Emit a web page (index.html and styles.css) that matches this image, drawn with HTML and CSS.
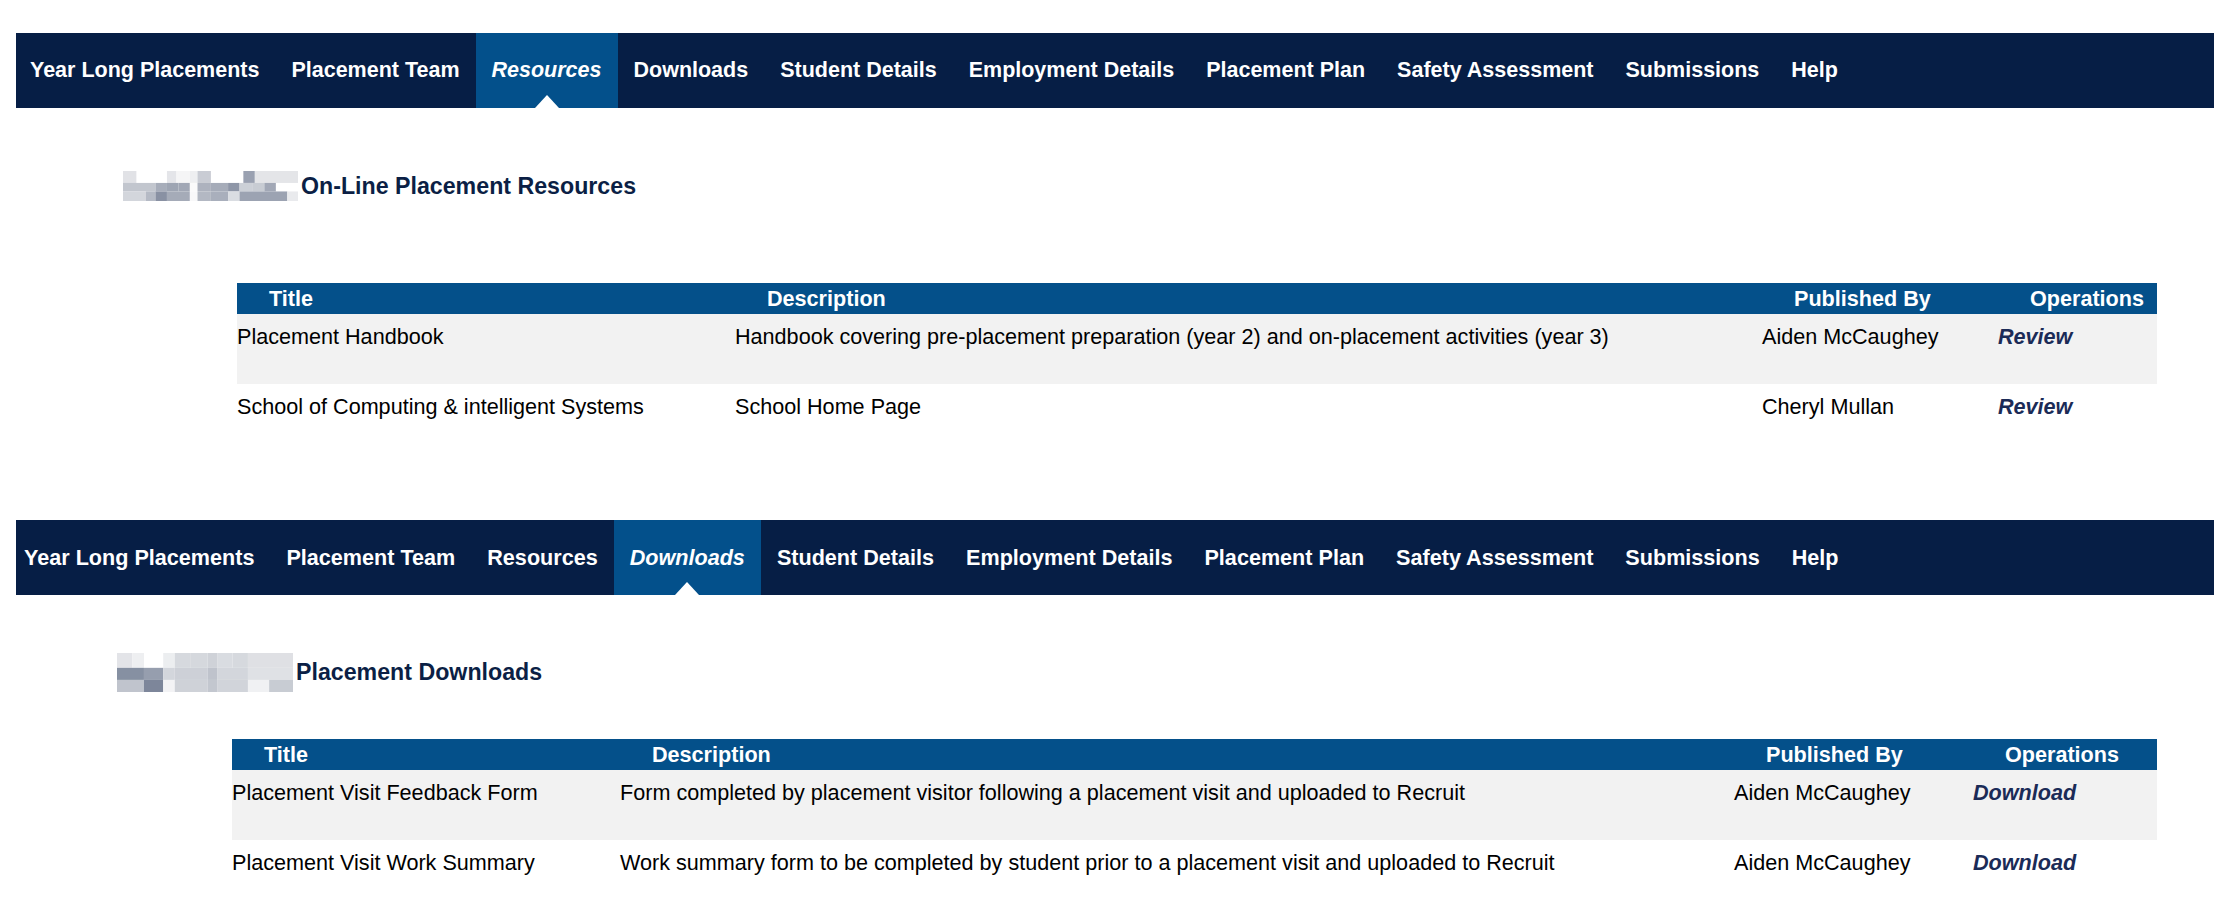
FILE: index.html
```html
<!DOCTYPE html>
<html lang="en">
<head>
<meta charset="utf-8">
<title>Placement Resources</title>
<link rel="stylesheet" href="styles.css">
</head>
<body>
<div class="page">
  <nav class="tabs tabs--resources">
    <ul class="tabs__list">
      <li class="tabs__item">Year Long Placements</li>
      <li class="tabs__item">Placement Team</li>
      <li class="tabs__item tabs__item--active">Resources</li>
      <li class="tabs__item">Downloads</li>
      <li class="tabs__item">Student Details</li>
      <li class="tabs__item">Employment Details</li>
      <li class="tabs__item">Placement Plan</li>
      <li class="tabs__item">Safety Assessment</li>
      <li class="tabs__item">Submissions</li>
      <li class="tabs__item">Help</li>
    </ul>
  </nav>

  <h2 class="section-title section-title--resources">
    <svg class="section-title__logo section-title__logo--a" viewBox="60 90 458 88" preserveAspectRatio="none" aria-hidden="true">
      <rect x="60" y="90" width="458" height="88" fill="#ffffff"/>
      <rect x="60" y="90" width="35" height="35" fill="#e1e2e6"/>
      <rect x="175" y="90" width="25" height="35" fill="#e4e5e9"/>
      <rect x="200" y="90" width="35" height="35" fill="#f5f5f6"/>
      <rect x="235" y="90" width="20" height="35" fill="#eeeff1"/>
      <rect x="255" y="90" width="35" height="35" fill="#c9ccd4"/>
      <rect x="375" y="90" width="30" height="35" fill="#9aa1b1"/>
      <rect x="405" y="90" width="113" height="35" fill="#e4e5e8"/>
      <rect x="60" y="125" width="85" height="25" fill="#c2c6ce"/>
      <rect x="145" y="125" width="30" height="25" fill="#a7adba"/>
      <rect x="175" y="125" width="30" height="25" fill="#9ea5b3"/>
      <rect x="205" y="125" width="30" height="25" fill="#a1a7b5"/>
      <rect x="235" y="125" width="20" height="25" fill="#fafafa"/>
      <rect x="255" y="125" width="35" height="25" fill="#adb2be"/>
      <rect x="290" y="125" width="45" height="25" fill="#a6acb9"/>
      <rect x="335" y="125" width="30" height="25" fill="#8e96a7"/>
      <rect x="365" y="125" width="35" height="25" fill="#ccd0d7"/>
      <rect x="400" y="125" width="30" height="25" fill="#c8ccd3"/>
      <rect x="430" y="125" width="30" height="25" fill="#a2a8b6"/>
      <rect x="60" y="150" width="60" height="28" fill="#d3d6dc"/>
      <rect x="120" y="150" width="25" height="28" fill="#b5bac5"/>
      <rect x="145" y="150" width="30" height="28" fill="#8991a3"/>
      <rect x="175" y="150" width="60" height="28" fill="#a5abb8"/>
      <rect x="235" y="150" width="20" height="28" fill="#f8f8f9"/>
      <rect x="255" y="150" width="35" height="28" fill="#b3b8c3"/>
      <rect x="290" y="150" width="45" height="28" fill="#a9afbc"/>
      <rect x="335" y="150" width="30" height="28" fill="#dadde2"/>
      <rect x="365" y="150" width="125" height="28" fill="#9ca3b2"/>
      <rect x="490" y="150" width="28" height="28" fill="#e9eaed"/>
    </svg>
    <span class="section-title__text">On-Line Placement Resources</span>
  </h2>

  <div class="grid-table grid-table--resources">
    <div class="grid-table__head">
      <div class="grid-table__th">Title</div>
      <div class="grid-table__th">Description</div>
      <div class="grid-table__th">Published By</div>
      <div class="grid-table__th">Operations</div>
    </div>
    <div class="grid-table__row grid-table__row--alt">
      <div class="grid-table__td">Placement Handbook</div>
      <div class="grid-table__td">Handbook covering pre-placement preparation (year 2) and on-placement activities (year 3)</div>
      <div class="grid-table__td">Aiden McCaughey</div>
      <div class="grid-table__td"><a class="grid-table__link" href="#">Review</a></div>
    </div>
    <div class="grid-table__row">
      <div class="grid-table__td">School of Computing &amp; intelligent Systems</div>
      <div class="grid-table__td">School Home Page</div>
      <div class="grid-table__td">Cheryl Mullan</div>
      <div class="grid-table__td"><a class="grid-table__link" href="#">Review</a></div>
    </div>
  </div>

  <nav class="tabs tabs--downloads">
    <ul class="tabs__list">
      <li class="tabs__item">Year Long Placements</li>
      <li class="tabs__item">Placement Team</li>
      <li class="tabs__item">Resources</li>
      <li class="tabs__item tabs__item--active">Downloads</li>
      <li class="tabs__item">Student Details</li>
      <li class="tabs__item">Employment Details</li>
      <li class="tabs__item">Placement Plan</li>
      <li class="tabs__item">Safety Assessment</li>
      <li class="tabs__item">Submissions</li>
      <li class="tabs__item">Help</li>
    </ul>
  </nav>

  <h2 class="section-title section-title--downloads">
    <svg class="section-title__logo section-title__logo--b" viewBox="45 37 457 113" preserveAspectRatio="none" aria-hidden="true">
      <rect x="45" y="37" width="457" height="113" fill="#ffffff"/>
      <rect x="45" y="37" width="40" height="43" fill="#e3e4e8"/>
      <rect x="85" y="37" width="30" height="43" fill="#eeeff1"/>
      <rect x="165" y="37" width="30" height="43" fill="#eceef0"/>
      <rect x="195" y="37" width="40" height="43" fill="#d6d9de"/>
      <rect x="235" y="37" width="45" height="43" fill="#d5d8dd"/>
      <rect x="280" y="37" width="25" height="43" fill="#cfd2d8"/>
      <rect x="305" y="37" width="40" height="43" fill="#d9dce1"/>
      <rect x="345" y="37" width="40" height="43" fill="#d6d9de"/>
      <rect x="385" y="37" width="117" height="43" fill="#dfe0e4"/>
      <rect x="45" y="80" width="70" height="35" fill="#8690a2"/>
      <rect x="115" y="80" width="50" height="35" fill="#969eae"/>
      <rect x="165" y="80" width="30" height="35" fill="#d3d6dc"/>
      <rect x="195" y="80" width="85" height="35" fill="#cdd0d7"/>
      <rect x="280" y="80" width="25" height="35" fill="#bfc3cc"/>
      <rect x="305" y="80" width="80" height="35" fill="#d3d6dc"/>
      <rect x="385" y="80" width="117" height="35" fill="#dfe1e5"/>
      <rect x="45" y="115" width="70" height="35" fill="#c0c4cd"/>
      <rect x="115" y="115" width="50" height="35" fill="#7d869a"/>
      <rect x="165" y="115" width="30" height="35" fill="#f3f3f5"/>
      <rect x="195" y="115" width="85" height="35" fill="#cfd2d8"/>
      <rect x="280" y="115" width="25" height="35" fill="#c3c7cf"/>
      <rect x="305" y="115" width="80" height="35" fill="#d1d4da"/>
      <rect x="385" y="115" width="55" height="35" fill="#f0f1f3"/>
      <rect x="440" y="115" width="62" height="35" fill="#c8ccd3"/>
    </svg>
    <span class="section-title__text">Placement Downloads</span>
  </h2>

  <div class="grid-table grid-table--downloads">
    <div class="grid-table__head">
      <div class="grid-table__th">Title</div>
      <div class="grid-table__th">Description</div>
      <div class="grid-table__th">Published By</div>
      <div class="grid-table__th">Operations</div>
    </div>
    <div class="grid-table__row grid-table__row--alt">
      <div class="grid-table__td">Placement Visit Feedback Form</div>
      <div class="grid-table__td">Form completed by placement visitor following a placement visit and uploaded to Recruit</div>
      <div class="grid-table__td">Aiden McCaughey</div>
      <div class="grid-table__td"><a class="grid-table__link" href="#">Download</a></div>
    </div>
    <div class="grid-table__row">
      <div class="grid-table__td">Placement Visit Work Summary</div>
      <div class="grid-table__td">Work summary form to be completed by student prior to a placement visit and uploaded to Recruit</div>
      <div class="grid-table__td">Aiden McCaughey</div>
      <div class="grid-table__td"><a class="grid-table__link" href="#">Download</a></div>
    </div>
  </div>
</div>
</body>
</html>
```

FILE: styles.css
```css
html, body {
  margin: 0;
  padding: 0;
  background: #ffffff;
}

body {
  font-family: "Liberation Sans", Arial, Helvetica, sans-serif;
  color: #000000;
  font-size: 21.6px;
}

.page {
  padding-top: 33px;
}

/* Tab navigation */
.tabs {
  margin-left: 16px;
  width: 2198px;
  height: 75px;
  background: #061e45;
  display: flex;
}

.tabs__list {
  display: flex;
  list-style: none;
  margin: 0;
  padding: 0;
}

.tabs__item {
  position: relative;
  display: flex;
  align-items: center;
  padding: 0 16px;
  color: #ffffff;
  font-weight: bold;
  white-space: nowrap;
}

.tabs--resources .tabs__item {
  font-size: 21.5px;
}

.tabs--downloads .tabs__item {
  font-size: 21.6px;
}

.tabs--resources .tabs__item:first-child {
  padding-left: 14px;
}

.tabs--downloads .tabs__item:first-child {
  padding-left: 8px;
}

.tabs__item--active {
  background: #03508b;
  font-style: italic;
}

.tabs__item--active::after {
  content: "";
  position: absolute;
  left: 50%;
  bottom: 0;
  transform: translateX(-50%);
  border-left: 12px solid transparent;
  border-right: 12px solid transparent;
  border-bottom: 13px solid #ffffff;
}

/* Section headings */
.section-title {
  display: flex;
  align-items: center;
  margin: 0;
  font-size: 23.2px;
  font-weight: bold;
  color: #0b1f45;
}

.section-title--resources {
  margin: 63px 0 0 123px;
}

.section-title--downloads {
  margin: 58px 0 0 117px;
}

.section-title__logo {
  display: block;
  margin-right: 3px;
}

.section-title__logo--a {
  width: 175px;
  height: 30px;
}

.section-title__logo--b {
  width: 176px;
  height: 39px;
}

/* Tables */
.grid-table {
  font-size: 21.6px;
}

.grid-table--resources {
  margin: 82px 0 0 237px;
  width: 1920px;
}

.grid-table--downloads {
  margin: 47px 0 0 232px;
  width: 1925px;
}

.grid-table__head,
.grid-table__row {
  display: grid;
}

.grid-table--resources .grid-table__head,
.grid-table--resources .grid-table__row {
  grid-template-columns: 498px 1027px 236px 159px;
}

.grid-table--downloads .grid-table__head,
.grid-table--downloads .grid-table__row {
  grid-template-columns: 388px 1114px 239px 184px;
}

.grid-table__head {
  height: 31px;
  background: #04508a;
  color: #ffffff;
  font-weight: bold;
}

.grid-table__th {
  padding-left: 32px;
  line-height: 31px;
  white-space: nowrap;
}

.grid-table__row {
  height: 70px;
}

.grid-table__row--alt {
  background: #f2f2f2;
}

.grid-table__td {
  padding-top: 10px;
  line-height: 26px;
  white-space: nowrap;
}

.grid-table__link {
  color: #1b2b57;
  font-weight: bold;
  font-style: italic;
  text-decoration: none;
}

.tabs--downloads {
  margin-top: 66px;
}
```
